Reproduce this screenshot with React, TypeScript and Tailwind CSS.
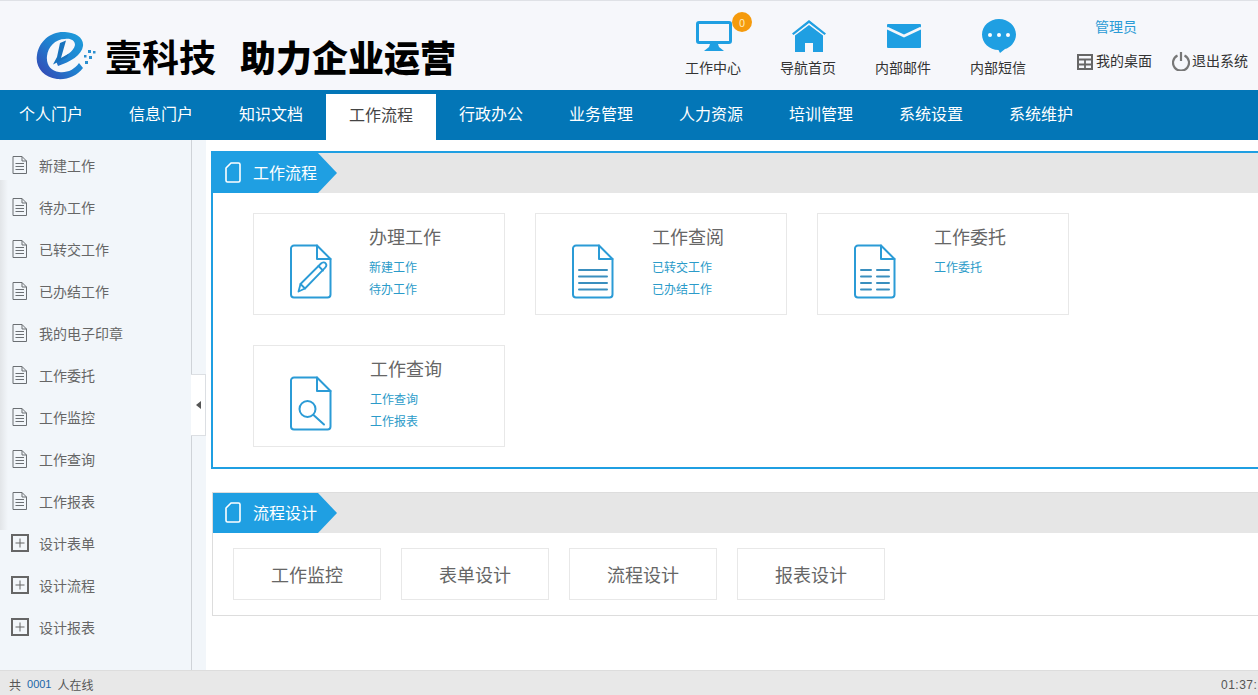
import React from "react";

const FONT = "[font-family:'Noto_Sans_CJK_SC','Liberation_Sans',sans-serif]";

const BLUE = "#2b9bd6";

function Doc({ children }: { children?: React.ReactNode }) {
  return (
    <svg width="42" height="55" viewBox="0 0 42 55" fill="none" stroke={BLUE} strokeWidth="2" strokeLinejoin="round" strokeLinecap="round">
      <path d="M4 1.5H27L40.5 15V50.5A3 3 0 0 1 37.5 53.5H4A3 3 0 0 1 1 50.5V4.5A3 3 0 0 1 4 1.5Z" />
      <path d="M27 1.5V15H40.5" />
      {children}
    </svg>
  );
}

const PenIcon = () => (
  <Doc>
    <path d="M8.500 47.500L10.500 40L31 19.500C32.500 18 34.500 18 35.500 19.200C36.700 20.500 36.500 22.300 35.200 23.600L15 44.500Z" strokeWidth="1.800" />
    <path d="M10.500 40L15 44.500M28.500 22L33 26.500" strokeWidth="1.800" />
  </Doc>
);
const LinesIcon = () => (
  <Doc>
    <path d="M7 26H35M7 32.500H35M7 39H35M7 45.500H35" stroke="#3a8fbf" />
  </Doc>
);
const ColumnsIcon = () => (
  <Doc>
    <path d="M7 26H17M7 32.500H17M7 39H17M7 45.500H17M23 26H35M23 32.500H35M23 39H35M23 45.500H35" stroke="#3a8fbf" />
  </Doc>
);
const SearchIcon = () => (
  <Doc>
    <circle cx="17.500" cy="33" r="8" />
    <path d="M23.500 39L34 48.500" />
  </Doc>
);

const SideDoc = () => (
  <svg width="15" height="18" viewBox="0 0 15 18" fill="none" stroke="#6b6f73" strokeWidth="1">
    <path d="M1 .5H10L14.500 5V17.500H1Z" />
    <path d="M10 .5V5H14.500M3.500 7.500H12M3.500 10.500H12M3.500 13.500H12" />
  </svg>
);

const SidePlus = () => (
  <svg width="18" height="18" viewBox="0 0 18 18" fill="none" stroke="#666">
    <rect x="1" y="1" width="16" height="16" strokeWidth="2" />
    <path d="M9 4.500V13.500M4.500 9H13.500" strokeWidth="1" />
  </svg>
);

const TagIcon = () => (
  <svg width="16" height="21" viewBox="0 0 16 21" fill="none" stroke="#fff" strokeWidth="1.600" strokeLinejoin="round">
    <path d="M6 1H13.500A1.500 1.500 0 0 1 15 2.500V18.500A1.500 1.500 0 0 1 13.500 20H2.500A1.500 1.500 0 0 1 1 18.500V6Z" />
  </svg>
);

function Logo() {
  return (
    <svg width="60" height="50" viewBox="0 0 60 50">
      <defs>
        <linearGradient id="lg" x1="0" y1="1" x2="1" y2="0">
          <stop offset="0" stopColor="#3a3fb0" />
          <stop offset="0.5" stopColor="#1f7fcf" />
          <stop offset="1" stopColor="#1ea0dc" />
        </linearGradient>
      </defs>
      <path
        d="M47 37C41 45 31 49 21 48C7 46-1 36 1 24C3 10 15 0 29 1C40 1.500 48 7 47 15C46 24 34 31 22 35L20 30C29 26 38 20 39 14C39 9 34 7 29 8C19 8 12 16 11 25C10 34 15 40 23 41C31 42 38 39 43 32Z"
        fill="url(#lg)"
      />
      <path d="M24 12L30 9.500L25 27L33 22.500L31 26.500L17 33.500L21 26Z" fill="#1872bd" />
      <g fill="#2a8fd0">
        <rect x="52" y="19" width="3" height="3" />
        <rect x="57" y="20" width="2.500" height="2.500" />
        <rect x="53" y="25" width="3" height="3" />
        <rect x="48" y="24" width="2.500" height="2.500" />
        <rect x="49" y="30" width="3" height="3" />
      </g>
    </svg>
  );
}

const MonitorIcon = () => (
  <svg width="36" height="30" viewBox="0 0 36 30">
    <rect x="1.500" y="1.500" width="33" height="20" rx="1.500" fill="none" stroke="#1f9fe2" strokeWidth="3" />
    <path d="M14 23H22L23 26L28 30H8L13 26Z" fill="#1f9fe2" />
  </svg>
);
const HomeIcon = () => (
  <svg width="34" height="32" viewBox="0 0 34 32">
    <path d="M0 13.500L17 0L34 13.500L32.500 15L17 3L1.500 15Z" fill="#1f9fe2" />
    <path d="M17 5L31 15.500V32H21V23H13V32H3V15.500Z" fill="#1f9fe2" />
  </svg>
);
const MailIcon = () => (
  <svg width="34" height="24" viewBox="0 0 34 24">
    <rect width="34" height="24" rx="1" fill="#1f9fe2" />
    <path d="M0 4L17 12L34 4" fill="none" stroke="#f6f7fb" strokeWidth="2.500" />
  </svg>
);
const ChatIcon = () => (
  <svg width="34" height="34" viewBox="0 0 34 34">
    <path d="M17 0C26.400 0 34 7 34 15.500C34 23 28 29 23 30L18 34L16.500 31C7.500 31 0 24 0 15.500C0 7 7.600 0 17 0Z" fill="#1f9fe2" />
    <circle cx="8" cy="16" r="2" fill="#fff" />
    <circle cx="17" cy="16" r="2" fill="#fff" />
    <circle cx="26" cy="16" r="2" fill="#fff" />
  </svg>
);
const DeskIcon = () => (
  <svg width="16" height="16" viewBox="0 0 16 16" fill="none" stroke="#666" strokeWidth="2">
    <rect x="1" y="1" width="14" height="14" />
    <path d="M1 5.500H15M1 10.500H15M8 5.500V15" strokeWidth="1.800" />
  </svg>
);
const PowerIcon = () => (
  <svg width="18" height="19" viewBox="0 0 18 19" fill="none" stroke="#777" strokeWidth="2.200">
    <path d="M5.500 3.500A8 8 0 1 0 12.500 3.500" />
    <path d="M9 0V9" />
  </svg>
);

const navItems = ["个人门户", "信息门户", "知识文档", "工作流程", "行政办公", "业务管理", "人力资源", "培训管理", "系统设置", "系统维护"];
const docItems = ["新建工作", "待办工作", "已转交工作", "已办结工作", "我的电子印章", "工作委托", "工作监控", "工作查询", "工作报表"];
const plusItems = ["设计表单", "设计流程", "设计报表"];

function Tag({ label }: { label: string }) {
  return (
    <div className="flex h-10 w-[124px] items-center gap-3 bg-[#1f9fe2] pb-[2px] pl-[12px] text-base text-white [clip-path:polygon(0_0,105px_0,124px_50%,105px_100%,0_100%)]">
      <TagIcon />
      <span>{label}</span>
    </div>
  );
}

function Card({ icon, title, links, pad }: { icon: React.ReactNode; title: string; links: string[]; pad: string }) {
  return (
    <div className="flex h-[102px] w-[252px] border border-[#e8e8e8] bg-white">
      <div className={`shrink-0 pl-[36px] pt-[30px] ${pad}`}>{icon}</div>
      <div className="pt-[8px]">
        <div className="text-lg leading-[28px] text-[#666]">{title}</div>
        <div className="mt-[6px] text-xs leading-[22px] text-[#2b9bc9]">
          {links.map((l) => (
            <div key={l}>{l}</div>
          ))}
        </div>
      </div>
    </div>
  );
}

export default function App() {
  return (
    <div className={`relative flex h-[695px] w-[1258px] flex-col overflow-hidden bg-white ${FONT}`}>
      {/* header */}
      <header className="flex h-[90px] shrink-0 border-t border-[#dfe1e6] bg-[#f6f7fb]">
        <div className="flex w-[685px] shrink-0 items-start pl-[36px] pt-[30px] text-black">
          <Logo />
          <span className="ml-[9px] text-[37px] font-bold leading-[50px]">壹科技</span>
          <span className="ml-[24px] text-[36px] font-black leading-[50px]">助力企业运营</span>
        </div>
        <div className="flex shrink-0">
          {[
            { label: "工作中心", icon: <MonitorIcon />, badge: true },
            { label: "导航首页", icon: <HomeIcon /> },
            { label: "内部邮件", icon: <MailIcon /> },
            { label: "内部短信", icon: <ChatIcon /> },
          ].map((it, i) => (
            <div key={it.label} className={`relative flex w-[56px] flex-col items-center ${i < 3 ? "mr-[39px]" : ""}`}>
              <div className="mt-[17px] flex h-[35px] items-center justify-center pl-[2px]">{it.icon}</div>
              <div className="mt-[4px] whitespace-nowrap text-sm leading-[20px] text-[#333]">{it.label}</div>
              {it.badge && (
                <div className="absolute left-[47px] top-[11px] flex h-5 w-5 items-center justify-center rounded-full bg-[#f59a0c] text-[11px] text-[#ffe9b8]">
                  0
                </div>
              )}
            </div>
          ))}
        </div>
        <div className="ml-[51px] flex shrink-0 flex-col whitespace-nowrap">
          <div className="mt-[15px] pl-[18px] text-sm leading-[20px] text-[#2b9bd6]">管理员</div>
          <div className="mt-[13px] flex items-center text-sm leading-[20px] text-[#333]">
            <span className="mr-[3px] mt-[3px] shrink-0"><DeskIcon /></span>
            <span>我的桌面</span>
            <span className="ml-[20px] mr-[2px] mt-[3px] shrink-0"><PowerIcon /></span>
            <span>退出系统</span>
          </div>
        </div>
      </header>

      {/* nav */}
      <nav className="flex h-[50px] shrink-0 items-end bg-[#0376b7] text-base">
        <div className="-ml-[4px] flex">
          {navItems.map((n) => (
            <div
              key={n}
              className={
                n === "工作流程"
                  ? "flex h-[46px] w-[110px] items-center justify-center bg-white pb-[6px] text-[#444]"
                  : "flex h-[46px] w-[110px] items-center justify-center pb-[8px] text-white"
              }
            >
              {n}
            </div>
          ))}
        </div>
      </nav>

      {/* body */}
      <div className="flex min-h-0 flex-1">
        <aside className="relative w-[192px] shrink-0 border-r border-[#cfd3d8] bg-[#f2f6fa] pt-[4px]">
          {docItems.map((t) => (
            <div key={t} className="flex h-[42px] items-center gap-[12px] pl-[12px] text-sm text-[#666]">
              <SideDoc />
              <span>{t}</span>
            </div>
          ))}
          {plusItems.map((t) => (
            <div key={t} className="flex h-[42px] items-center gap-[10px] pl-[11px] text-sm text-[#666]">
              <SidePlus />
              <span>{t}</span>
            </div>
          ))}
          <div className="absolute left-0 top-[40px] h-[350px] w-[8px] bg-gradient-to-r from-[#e2e5e8] to-transparent" />
        </aside>
        <div className="w-[14px] shrink-0 bg-[#f2f6fa]" />
        <main className="min-w-0 flex-1 pl-[5px] pt-[11px]">
          <section className="w-[1100px] border-2 border-[#1f9fe2]">
            <div className="h-10 bg-[#e6e6e6]">
              <Tag label="工作流程" />
            </div>
            <div className="flex w-[900px] flex-wrap gap-[30px] pb-[20px] pl-[40px] pt-[20px]">
              <Card icon={<PenIcon />} title="办理工作" links={["新建工作", "待办工作"]} pad="w-[115px]" />
              <Card icon={<LinesIcon />} title="工作查阅" links={["已转交工作", "已办结工作"]} pad="w-[116px]" />
              <Card icon={<ColumnsIcon />} title="工作委托" links={["工作委托"]} pad="w-[116px]" />
              <Card icon={<SearchIcon />} title="工作查询" links={["工作查询", "工作报表"]} pad="w-[116px]" />
            </div>
          </section>
          <section className="ml-[1px] mt-[23px] w-[1100px] border border-[#ddd]">
            <div className="h-10 bg-[#e6e6e6]">
              <Tag label="流程设计" />
            </div>
            <div className="flex gap-[20px] pb-[15px] pl-[20px] pt-[15px]">
              {["工作监控", "表单设计", "流程设计", "报表设计"].map((b) => (
                <div key={b} className="flex h-[52px] w-[148px] items-center justify-center border border-[#e8e8e8] text-lg text-[#666]">
                  {b}
                </div>
              ))}
            </div>
          </section>
        </main>
      </div>

      {/* status */}
      <footer className="flex h-[25px] shrink-0 items-center justify-between whitespace-nowrap border-t border-[#dddddd] bg-[#e8e8e8] pl-[9px] pt-[3px] text-xs text-[#555]">
        <div className="flex items-center">
          <span>共</span>
          <span className="mx-[6px] text-[11px] text-[#1b66a8] [font-family:'Liberation_Sans',sans-serif]">0001</span>
          <span>人在线</span>
        </div>
        <div className="w-[37px] overflow-hidden tracking-[0.5px] [font-family:'Liberation_Sans',sans-serif]">01:37:</div>
      </footer>

      {/* collapse handle */}
      <div className="absolute left-[191px] top-[374px] flex h-[62px] w-[15px] items-center justify-center border border-l-0 border-[#dcdfe3] bg-white">
        <div className="h-0 w-0 border-y-[4px] border-r-[5px] border-y-transparent border-r-[#555]" />
      </div>
    </div>
  );
}
